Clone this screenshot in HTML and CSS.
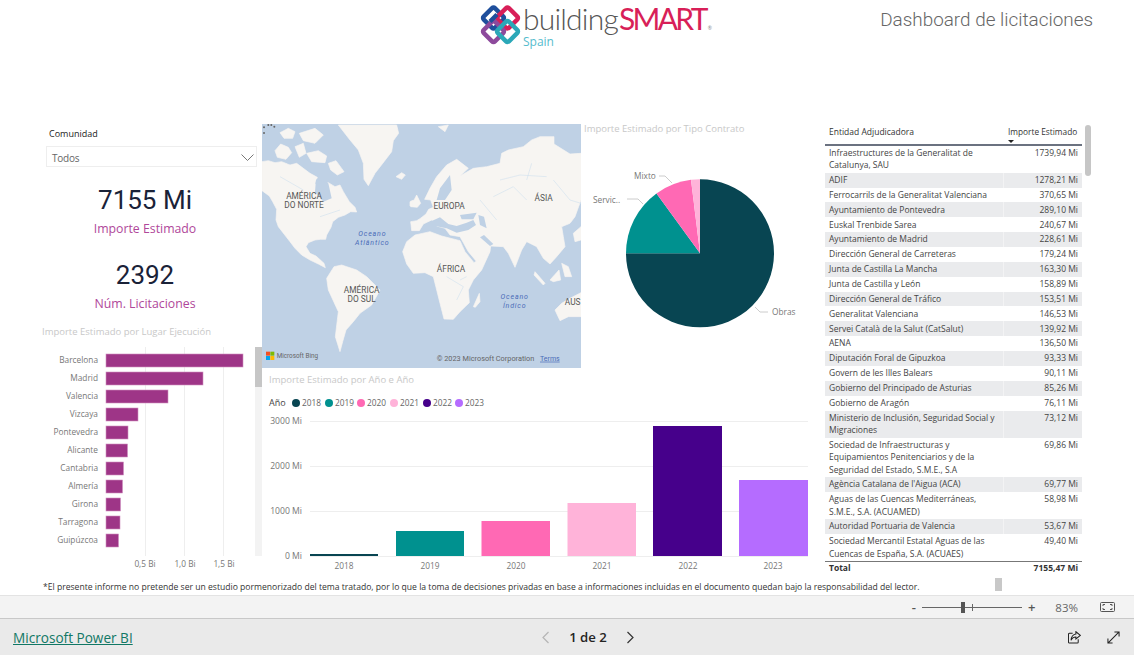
FILE: index.html
```html
<!DOCTYPE html>
<html lang="es">
<head>
<meta charset="utf-8">
<title>Dashboard de licitaciones</title>
<link rel="stylesheet" href="styles.css">
</head>
<body>
<div class="app">
  <main class="report">
    <header class="top">
      <div class="logo">
        <svg class="logo-mark" viewBox="0 0 43 43" width="43" height="43">
          <g fill="none" stroke-width="4.400">
            <rect class="r-blue" x="6.500" y="7" width="16" height="16" rx="2" transform="rotate(45 14.500 15)"/>
            <rect class="r-red" x="20.500" y="7" width="16" height="16" rx="2" transform="rotate(45 28.500 15)"/>
            <rect class="r-purple" x="6.500" y="20.500" width="16" height="16" rx="2" transform="rotate(45 14.500 28.500)"/>
            <rect class="r-teal" x="20.500" y="20.500" width="16" height="16" rx="2" transform="rotate(45 28.500 28.500)"/>
            <path class="r-blue" d="M11 18.500 L18 11.500"/>
          </g>
        </svg>
        <div class="logo-text">
          <div class="logo-name">building<span class="logo-smart">SMART</span><span class="logo-reg">®</span></div>
          <div class="logo-spain">Spain</div>
        </div>
      </div>
      <h1 class="page-title">Dashboard de licitaciones</h1>
    </header>

    <div class="canvas">
      <section class="col-left">
        <div class="slicer">
          <div class="slicer-label">Comunidad</div>
          <div class="slicer-box">
            <span>Todos</span>
            <svg width="13" height="7" viewBox="0 0 13 7"><path d="M.5.5l6 6 6-6" fill="none" stroke="#777"/></svg>
          </div>
        </div>
        <div class="kpi kpi-first"><div class="kpi-value">7155 Mi</div><div class="kpi-label">Importe Estimado</div></div>
        <div class="kpi kpi-second"><div class="kpi-value">2392</div><div class="kpi-label">Núm. Licitaciones</div></div>
        <h2 class="visual-title title-place">Importe Estimado por Lugar Ejecución</h2>
        <svg class="bar-chart" width="262" height="232" viewBox="0 340 262 232">
          <g class="grid">
            <path d="M145.500 347V556M184.500 347V556M223.500 347V556"/>
          </g>
          <g class="bars">
            <rect x="106" y="354" width="137" height="13"/>
            <rect x="106" y="372" width="97" height="13"/>
            <rect x="106" y="390" width="62" height="13"/>
            <rect x="106" y="408" width="32" height="13"/>
            <rect x="106" y="426" width="22" height="13"/>
            <rect x="106" y="444" width="21.500" height="13"/>
            <rect x="106" y="462" width="17.500" height="13"/>
            <rect x="106" y="480" width="16.500" height="13"/>
            <rect x="106" y="498" width="14.500" height="13"/>
            <rect x="106" y="516" width="14" height="13"/>
            <rect x="106" y="534" width="12.500" height="13"/>
          </g>
          <g class="tick tick-end">
            <text x="98" y="363">Barcelona</text>
            <text x="98" y="381">Madrid</text>
            <text x="98" y="399">Valencia</text>
            <text x="98" y="417">Vizcaya</text>
            <text x="98" y="435">Pontevedra</text>
            <text x="98" y="453">Alicante</text>
            <text x="98" y="471">Cantabria</text>
            <text x="98" y="489">Almería</text>
            <text x="98" y="507">Girona</text>
            <text x="98" y="525">Tarragona</text>
            <text x="98" y="543">Guipúzcoa</text>
          </g>
          <g class="tick tick-mid">
            <text x="145" y="567">0,5 Bi</text>
            <text x="185" y="567">1,0 Bi</text>
            <text x="224" y="567">1,5 Bi</text>
          </g>
          <rect class="scroll-track" x="255" y="347" width="7" height="209"/>
          <rect class="scroll-thumb" x="255" y="347" width="7" height="40"/>
        </svg>
      </section>

      <section class="col-mid">
        <div class="mid-top">
          <svg class="map" width="319" height="244" viewBox="6 12 957 732">
            <rect x="6" y="12" width="957" height="732" class="sea"/>
            <g class="land">
              <path d="M6 125L25 122 45 128 65 125 90 135 110 130 130 145 150 160 172 172 165 190 178 205 190 195 205 188 225 200 240 195 250 215 268 245 285 262 290 276 272 275 255 285 235 292 218 305 213 322 200 345 197 358 182 358 165 360 145 368 138 380 150 400 168 408 192 430 196 443 175 432 150 420 125 405 105 385 90 365 72 342 55 320 48 300 50 268 38 245 28 228 6 212Z"/>
              <path d="M235 15L410 15 416 40 400 62 395 95 372 125 345 160 325 197 312 178 310 130 295 90 270 60Z"/>
              <path d="M45 92L62 72 85 82 95 98 78 118 52 112ZM60 38L85 25 105 35 98 55 72 55ZM105 80L130 70 138 100 118 112ZM140 100L175 92 200 108 195 128 155 125ZM118 40L165 25 190 45 165 70 130 62ZM205 130L228 122 252 155 232 165 212 150Z"/>
              <path d="M408 170L425 158 436 165 425 178Z"/>
              <path d="M452 260L470 225 482 250 472 262ZM450 245L460 240 460 258 450 258Z"/>
              <path d="M455 332L452 305 470 302 480 296 498 282 506 268 520 262 512 240 494 238 510 205 530 170 560 135 590 118 625 145 600 168 640 145 680 140 720 130 725 100 745 90 790 80 815 60 840 50 882 50 882 72 930 102 963 100 963 240 945 290 930 310 905 320 910 350 915 380 890 410 870 432 850 415 830 380 800 365 785 390 765 442 745 400 730 380 692 378 690 395 650 425 625 395 600 350 570 345 555 325 530 318 515 300 490 312 478 332Z"/>
              <path d="M428 395L440 365 465 345 510 335 545 348 600 362 615 395 642 428 690 395 665 450 640 480 625 510 628 548 600 575 580 598 552 597 540 550 530 510 520 470 495 458 460 460 440 432Z"/>
              <path d="M200 475L222 440 245 435 290 450 320 470 360 510 335 555 300 580 280 605 258 630 248 665 240 695 226 650 235 575 205 510Z"/>
              <path d="M885 570L905 550 930 535 963 518 963 590 925 590 900 602Z"/>
              <path d="M640 560L658 520 660 545 646 562ZM870 480L897 450 902 480 880 485ZM825 455L855 490 850 495 822 465Z"/>
              <path d="M905 430L925 440 935 470 915 470ZM940 340L963 320 963 360 945 365ZM535 20L565 15 555 35Z"/>
            </g>
            <g class="water">
              <path d="M510 305L540 292 565 312 590 318 620 308 640 300 648 315 625 330 590 338 560 325 525 318ZM600 285L650 278 640 298 605 298Z"/>
              <path d="M655 285L672 290 680 325 660 315ZM540 205L570 165 575 210 555 240 530 240ZM168 178L205 190 215 235 190 245 165 215Z"/>
              <path d="M690 378L660 352 672 345 700 372Z"/>
            </g>
            <g class="rivers">
              <path d="M720 180L780 165 860 170M700 230L760 200 800 240M880 180L930 240 963 250M60 170L130 210M180 290L240 270M560 470L610 500 590 540M600 480L620 470M660 240L710 300M815 130L800 180"/>
            </g>
            <g class="map-dots">
              <circle cx="12" cy="22" r="3"/><circle cx="25" cy="15" r="3"/><circle cx="34" cy="15" r="3"/><circle cx="43" cy="20" r="3"/><circle cx="12" cy="39" r="3"/>
            </g>
            <g class="map-label">
              <text x="132" y="237">AMÉRICA</text>
              <text x="132" y="265">DO NORTE</text>
              <text x="567" y="267">EUROPA</text>
              <text x="851" y="243">ÁSIA</text>
              <text x="573" y="455">ÁFRICA</text>
              <text x="305" y="520">AMÉRICA</text>
              <text x="305" y="547">DO SUL</text>
              <text x="938" y="555">AUS</text>
            </g>
            <g class="map-ocean">
              <text x="337" y="349">Oceano</text>
              <text x="337" y="376">Atlântico</text>
              <text x="764" y="537">Oceano</text>
              <text x="764" y="564">Índico</text>
            </g>
            <g>
              <rect x="18" y="695" width="12" height="12" fill="#f25022"/>
              <rect x="31" y="695" width="12" height="12" fill="#7fba00"/>
              <rect x="18" y="708" width="12" height="12" fill="#00a4ef"/>
              <rect x="31" y="708" width="12" height="12" fill="#ffb900"/>
            </g>
            <text class="map-credit" x="50" y="715">Microsoft Bing</text>
            <text class="map-credit map-copy" x="530" y="722">© 2023 Microsoft Corporation</text>
            <text class="map-credit map-link" x="840" y="722">Terms</text>
          </svg>
          <div class="pie-visual">
            <h2 class="visual-title title-pie">Importe Estimado por Tipo Contrato</h2>
            <svg class="pie" width="241" height="215" viewBox="581 135 241 215">
              <path fill="#084552" d="M700 253.300V179.300A74 74 0 1 1 626 253.300Z"/>
              <path fill="#00918f" d="M700 253.300H626A74 74 0 0 1 656.500 193.400Z"/>
              <path fill="#ff69b4" d="M700 253.300L656.500 193.400A74 74 0 0 1 691 179.800Z"/>
              <path fill="#ffb3d9" d="M700 253.300L691 179.800A74 74 0 0 1 700 179.300Z"/>
              <path class="leader" d="M659 176H665L672 183M627 199H638L643 204M755 307L760 312H768"/>
              <g class="tick">
                <text x="634" y="179">Mixto</text>
                <text x="593" y="203">Servic..</text>
                <text x="772" y="315">Obras</text>
              </g>
            </svg>
          </div>
        </div>
        <div class="col-visual">
          <h2 class="visual-title title-year">Importe Estimado por Año e Año</h2>
          <svg class="col-chart" width="560" height="188" viewBox="262 390 560 188">
            <g class="legend">
              <text class="legend-head" x="269" y="405">Año</text>
              <circle cx="296" cy="402" r="4" fill="#084552"/><text x="302" y="405">2018</text>
              <circle cx="329" cy="402" r="4" fill="#00918f"/><text x="335" y="405">2019</text>
              <circle cx="361" cy="402" r="4" fill="#ff69b4"/><text x="367" y="405">2020</text>
              <circle cx="394" cy="402" r="4" fill="#ffb3d9"/><text x="400" y="405">2021</text>
              <circle cx="427" cy="402" r="4" fill="#46008b"/><text x="433" y="405">2022</text>
              <circle cx="459" cy="402" r="4" fill="#b56cff"/><text x="465" y="405">2023</text>
            </g>
            <g class="grid"><path d="M310 420.500H808M310 465.500H808M310 510.500H808M310 555.500H808"/></g>
            <rect x="310" y="553" width="68" height="2" fill="#084552"/>
            <rect x="396" y="530" width="68" height="25" fill="#00918f"/>
            <rect x="481.500" y="520" width="68.500" height="35" fill="#ff69b4"/>
            <rect x="567.500" y="502" width="68.500" height="53" fill="#ffb3d9"/>
            <rect x="653" y="425" width="69" height="130" fill="#46008b"/>
            <rect x="739" y="479" width="69" height="76" fill="#b56cff"/>
            <g class="tick tick-end tick-value">
              <text x="302" y="423">3000 Mi</text>
              <text x="302" y="468">2000 Mi</text>
              <text x="302" y="513">1000 Mi</text>
              <text x="302" y="558">0 Mi</text>
            </g>
            <g class="tick tick-mid">
              <text x="344" y="568">2018</text>
              <text x="430" y="568">2019</text>
              <text x="516" y="568">2020</text>
              <text x="602" y="568">2021</text>
              <text x="688" y="568">2022</text>
              <text x="773" y="568">2023</text>
            </g>
          </svg>
        </div>
      </section>

      <section class="col-table">
        <div class="table-wrap">
          <div class="table">
            <div class="thead">
              <div>Entidad Adjudicadora</div>
              <div class="sorted">Importe Estimado<i class="sort-caret"></i></div>
            </div>
            <div class="tr"><div>Infraestructures de la Generalitat de Catalunya, SAU</div><div>1739,94 Mi</div></div>
            <div class="tr"><div>ADIF</div><div>1278,21 Mi</div></div>
            <div class="tr"><div>Ferrocarrils de la Generalitat Valenciana</div><div>370,65 Mi</div></div>
            <div class="tr"><div>Ayuntamiento de Pontevedra</div><div>289,10 Mi</div></div>
            <div class="tr"><div>Euskal Trenbide Sarea</div><div>240,67 Mi</div></div>
            <div class="tr"><div>Ayuntamiento de Madrid</div><div>228,61 Mi</div></div>
            <div class="tr"><div>Dirección General de Carreteras</div><div>179,24 Mi</div></div>
            <div class="tr"><div>Junta de Castilla La Mancha</div><div>163,30 Mi</div></div>
            <div class="tr"><div>Junta de Castilla y León</div><div>158,89 Mi</div></div>
            <div class="tr"><div>Dirección General de Tráfico</div><div>153,51 Mi</div></div>
            <div class="tr"><div>Generalitat Valenciana</div><div>146,53 Mi</div></div>
            <div class="tr"><div>Servei Català de la Salut (CatSalut)</div><div>139,92 Mi</div></div>
            <div class="tr"><div>AENA</div><div>136,50 Mi</div></div>
            <div class="tr"><div>Diputación Foral de Gipuzkoa</div><div>93,33 Mi</div></div>
            <div class="tr"><div>Govern de les Illes Balears</div><div>90,11 Mi</div></div>
            <div class="tr"><div>Gobierno del Principado de Asturias</div><div>85,26 Mi</div></div>
            <div class="tr"><div>Gobierno de Aragón</div><div>76,11 Mi</div></div>
            <div class="tr"><div>Ministerio de Inclusión, Seguridad Social y Migraciones</div><div>73,12 Mi</div></div>
            <div class="tr"><div>Sociedad de Infraestructuras y Equipamientos Penitenciarios y de la Seguridad del Estado, S.M.E., S.A</div><div>69,86 Mi</div></div>
            <div class="tr"><div>Agència Catalana de l'Aigua (ACA)</div><div>69,77 Mi</div></div>
            <div class="tr"><div>Aguas de las Cuencas Mediterráneas, S.M.E., S.A. (ACUAMED)</div><div>58,98 Mi</div></div>
            <div class="tr"><div>Autoridad Portuaria de Valencia</div><div>53,67 Mi</div></div>
            <div class="tr"><div>Sociedad Mercantil Estatal Aguas de las Cuencas de España, S.A. (ACUAES)</div><div>49,40 Mi</div></div>
            <div class="tfoot"><div>Total</div><div>7155,47 Mi</div></div>
          </div>
          <div class="v-scroll"></div>
        </div>
      </section>
    </div>

    <div class="note-row">
      <p class="note">*El presente informe no pretende ser un estudio pormenorizado del tema tratado, por lo que la toma de decisiones privadas en base a informaciones incluidas en el documento quedan bajo la responsabilidad del lector.</p>
      <div class="h-scroll"></div>
    </div>
  </main>

  <div class="zoombar">
    <span class="zoom-sign minus">-</span>
    <div class="slider"><i class="slider-tick"></i><i class="slider-thumb"></i></div>
    <span class="zoom-sign plus">+</span>
    <span class="zoom-pct">83%</span>
    <svg class="fit-icon" width="15" height="10" viewBox="0 0 15 10" fill="none" stroke="#555">
      <rect x=".5" y=".5" width="14" height="9" rx="1"/>
      <path d="M3 4V2.500H5M10 2.500H12V4M12 6V7.500H10M5 7.500H3V6"/>
    </svg>
  </div>

  <footer class="footer">
    <a class="pbi-link" href="#">Microsoft Power BI</a>
    <nav class="pager">
      <svg width="9" height="13" viewBox="0 0 9 13"><path d="M7.500 1L2 6.500 7.500 12" fill="none" stroke="#b5b5b5" stroke-width="1.200"/></svg>
      <span class="page-num">1 de 2</span>
      <svg width="9" height="13" viewBox="0 0 9 13"><path d="M1.500 1L7 6.500 1.500 12" fill="none" stroke="#333" stroke-width="1.200"/></svg>
    </nav>
    <div class="foot-actions">
      <svg width="13" height="13" viewBox="0 0 14 14" fill="none" stroke="#222" stroke-width="1.100">
        <path d="M5 2.500H1.500A1 1 0 0 0 .5 3.500V12A1 1 0 0 0 1.500 13H10A1 1 0 0 0 11 12V9"/>
        <path d="M8.500.8L13.300 4.800 8.500 8.600V6.500C6 6.500 4.300 7.500 3.300 10 3.300 6.500 5.500 3.400 8.500 3.200Z"/>
      </svg>
      <svg width="13" height="13" viewBox="0 0 14 14" fill="none" stroke="#222" stroke-width="1.100">
        <path d="M1 13L13 1M8 1H13V6M1 8V13H6"/>
      </svg>
    </div>
  </footer>
</div>
</body>
</html>
```

FILE: styles.css
```css
* { box-sizing: border-box; }
html, body { margin: 0; height: 100%; background: #fff; }
body { font-family: "Open Sans", "Noto Sans", sans-serif; color: #333; overflow: hidden; }
svg { display: block; }
h1, h2, p { margin: 0; font-weight: 400; }

.app { width: 1134px; height: 655px; display: flex; flex-direction: column; }
.report { height: 595px; overflow: hidden; display: flex; flex-direction: column; }

/* Header */
.top { height: 124px; flex: none; display: flex; justify-content: space-between; align-items: flex-start; padding: 3px 41px 0 479px; }
.logo { display: flex; gap: 1px; width: 250px; }
.logo-mark { flex: none; }
.r-blue { stroke: #1f4f9c; }
.r-red { stroke: #d81f58; }
.r-purple { stroke: #8d4a9c; }
.r-teal { stroke: #2ba8b8; }
.logo-text { display: flex; flex-direction: column; }
.logo-name { font-family: Lato, sans-serif; font-weight: 300; font-size: 30px; line-height: 30px; height: 33px; color: #555; letter-spacing: -.8px; white-space: nowrap; }
.logo-smart { color: #d81f58; font-weight: 400; font-size: 30px; letter-spacing: -2.700px; margin-left: 1px; }
.logo-reg { color: #888; font-size: 5px; font-weight: 400; margin-left: 2px; }
.logo-spain { font-family: "Open Sans", sans-serif; font-size: 12px; line-height: 13px; margin-top: -1px; color: #55bccd; }
.page-title { font-family: Roboto, sans-serif; font-weight: 300; font-size: 18.900px; line-height: 24px; margin-top: 5px; color: #666; white-space: nowrap; }

/* Canvas */
.canvas { height: 454px; flex: none; display: flex; }
.col-left { width: 262px; flex: none; display: flex; flex-direction: column; }
.col-mid { width: 560px; flex: none; display: flex; flex-direction: column; }
.col-table { flex: 1; padding: 1px 0 0 3px; }

.slicer { padding: 4px 5px 0 46px; }
.slicer-label { font-size: 9px; line-height: 12px; color: #222; padding-left: 3px; }
.slicer-box { margin-top: 6px; height: 21px; border: 1px solid #eee; display: flex; align-items: center; justify-content: space-between; padding: 2px 2px 0 5px; font-size: 10px; letter-spacing: -.2px; color: #666; }

.kpi { text-align: center; width: 290px; }
.kpi-first { margin-top: 17px; }
.kpi-second { margin-top: 22px; }
.kpi-value { font-family: Roboto, sans-serif; font-size: 26px; line-height: 32px; color: #1a2238; }
.kpi-label { font-size: 12.300px; line-height: 16px; margin-top: 5px; color: #b0479a; }

.visual-title { font-size: 9.500px; line-height: 12px; color: #c8c8c8; white-space: nowrap; }
.title-place { margin: 14px 0 0 42px; }
.bar-chart { margin-top: 2px; }
.title-pie { margin-top: -1px; padding: 0 0 0 3px; height: 12px; }
.title-year { margin: 6px 0 0 7px; }
.col-chart { margin-top: 5px; }

.grid path { stroke: #eeeeee; fill: none; }
.bars rect { fill: #9e3587; stroke: #cf8fc0; stroke-width: .6px; }
.tick text { font-size: 8.300px; fill: #777; }
.tick-value text { font-size: 8.600px; }
.tick-end text { text-anchor: end; }
.tick-mid text { text-anchor: middle; }
.scroll-track { fill: #f3f3f3; }
.scroll-thumb { fill: #c6c6c6; }

.mid-top { display: flex; height: 244px; }
.map { flex: none; }
.sea { fill: #bfd1e5; }
.land { fill: #f7f5f2; stroke: #f7f5f2; stroke-width: 2px; stroke-linejoin: round; filter: blur(.5px); }
.water { fill: #bfd1e5; filter: blur(.5px); }
.rivers path { fill: none; stroke: #d3e2ef; stroke-width: 2px; }
.map-dots { fill: #666; }
.map-label text { font-family: Roboto, sans-serif; font-size: 25px; fill: #555; text-anchor: middle; }
.map-ocean text { font-family: Roboto, sans-serif; font-size: 21px; font-style: italic; letter-spacing: 2.500px; fill: #4a6cb8; text-anchor: middle; }
.map-credit { font-family: Roboto, sans-serif; font-size: 19px; fill: #666; }
.map-copy { font-size: 22px; }
.map-link { fill: #4a6cb8; font-size: 21px; text-decoration: underline; }

.pie-visual { flex: 1; }
.leader { fill: none; stroke: #ccc; }

.col-visual { flex: 1; }
.legend text { font-size: 8.300px; fill: #666; }
.legend .legend-head { fill: #444; font-size: 9px; }

/* Table */
.table-wrap { display: flex; gap: 3px; align-items: flex-start; }
.table { width: 257px; font-size: 8.500px; line-height: 12.300px; color: #444; }
.thead, .tr, .tfoot { display: grid; grid-template-columns: 178px 79px; }
.thead { height: 20.600px; border-bottom: 2px solid #6b7280; color: #333; }
.thead > div { padding: 1px 4px 0; }
.thead .sorted { padding: 1px 3px 0 5px; position: relative; white-space: nowrap; font-size: 8.300px; }
.sort-caret { position: absolute; left: 5px; top: 15px; border: 3px solid transparent; border-top-color: #222; border-bottom: 0; }
.tr > div { padding: 1.290px 4px; }
.tr > div:last-child, .tfoot > div:last-child { text-align: right; }
.tr:nth-child(odd) { background: #eaebed; }
.tr:nth-child(odd) > div:last-child { border-left: 1px solid #f3f3f4; }
.tfoot { border-top: 1px solid #777; font-weight: 700; color: #333; }
.tfoot > div { padding: 0 4px; }
.v-scroll { width: 6px; height: 51px; border-radius: 3px; background: #c6c6c6; }

/* Note */
.note-row { flex: 1; display: flex; align-items: flex-start; padding: 0 0 0 43px; }
.note { font-size: 8.600px; line-height: 12px; color: #333; white-space: nowrap; width: 952px; padding-top: 3px; }
.h-scroll { width: 7px; height: 13px; background: #c8c8c8; flex: none; }

/* Zoom bar */
.zoombar { height: 24px; flex: none; background: #f3f3f3; border-top: 1px solid #e3e3e3; border-bottom: 1px solid #c8c8c8; display: flex; align-items: center; justify-content: flex-end; padding-right: 19px; }
.zoom-sign { color: #555; font-size: 13px; line-height: 16px; font-weight: 600; }
.slider { width: 100px; height: 1px; background: #666; margin: 0 6px; position: relative; }
.slider-tick { position: absolute; left: 50px; top: -3px; width: 1px; height: 7px; background: #666; }
.slider-thumb { position: absolute; left: 39px; top: -5px; width: 4px; height: 11px; background: #555; }
.zoom-pct { font-size: 11.500px; color: #666; margin: 0 22px 0 20px; }

/* Footer */
.footer { flex: 1; background: #eaeaea; display: grid; grid-template-columns: 1fr auto 1fr; align-items: center; padding: 0 13px; }
.pbi-link { color: #117865; font-size: 13.600px; justify-self: start; padding-top: 1px; }
.pager { display: flex; align-items: center; gap: 19px; margin-left: 42px; }
.page-num { font-size: 13.200px; font-weight: 600; color: #252423; }
.foot-actions { display: flex; gap: 26px; justify-content: flex-end; padding-right: 1px; }
```
